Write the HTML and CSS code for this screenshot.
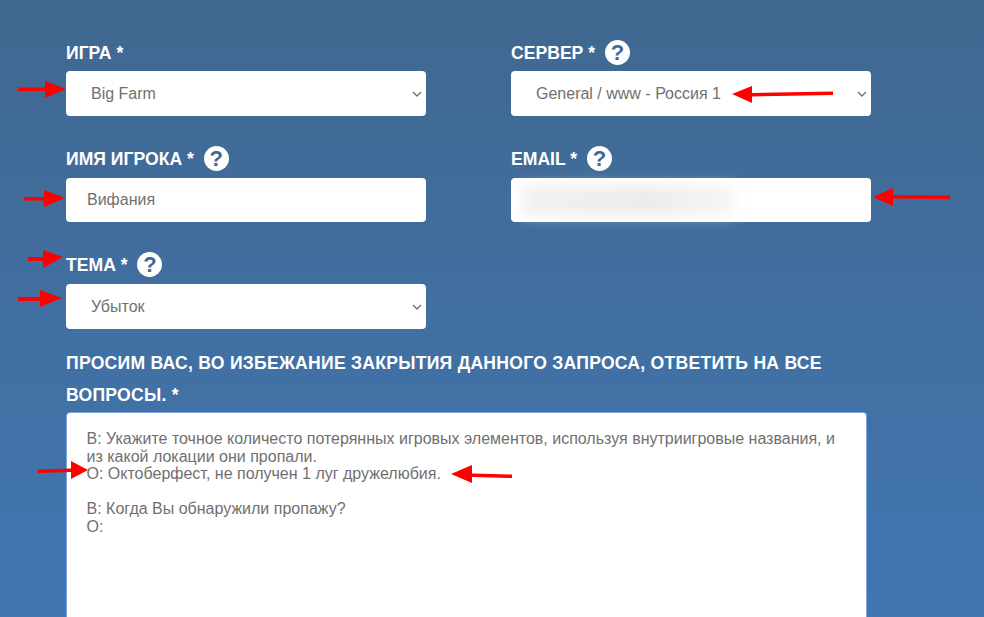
FILE: index.html
```html
<!DOCTYPE html>
<html>
<head>
  <meta charset="UTF-8" />
  <title>Запрос</title>
  <link rel="stylesheet" href="styles.css">
</head>
<body>
  <form class="ticket-form">
    <div class="form-row">
      <div class="field">
        <label class="field-label">Игра * </label>
        <select class="control select-control"><option>Big Farm</option></select>
      </div>
      <div class="field">
        <label class="field-label">Сервер * <span class="help-icon">?</span></label>
        <select class="control select-control"><option>General / www - Россия 1</option></select>
      </div>
    </div>

    <div class="form-row">
      <div class="field">
        <label class="field-label">Имя игрока * <span class="help-icon">?</span></label>
        <input class="control input-control" type="text" value="Вифания">
      </div>
      <div class="field">
        <label class="field-label">Email * <span class="help-icon">?</span></label>
        <div class="email-wrap">
          <input class="control input-control" type="text">
          <div class="email-blur"></div>
        </div>
      </div>
    </div>

    <div class="form-row">
      <div class="field">
        <label class="field-label">Тема * <span class="help-icon">?</span></label>
        <select class="control select-control"><option>Убыток</option></select>
      </div>
    </div>

    <div class="field field-wide">
      <label class="field-label">Просим вас, во избежание закрытия данного запроса, ответить на все вопросы. *</label>
      <textarea class="message">В: Укажите точное количесто потерянных игровых элементов, используя внутриигровые названия, и из какой локации они пропали.
О: Октоберфест, не получен 1 луг дружелюбия.

В: Когда Вы обнаружили пропажу?
О:</textarea>
    </div>
  </form>

  <!-- red arrows drawn on top of the screenshot -->
  <svg class="arrows" width="984" height="617" viewBox="0 0 984 617">
    <path d="M18 87.5L45 87.5L45 81L66 89L45 98L45 91L18 91Z" />
    <path d="M24 197L44 197L44 190L65 198L44 207L44 200.5L24 200.5Z" />
    <path d="M833 91.5L833 95L752 96.5L752 103L732 94L752 86L752 93Z" />
    <path d="M950 195.5L950 199L893 198.5L893 206L873 197L893 188L893 195Z" />
    <path d="M28 257L43 257L43 250L63 257L43 268L43 261L28 261Z" />
    <path d="M18 297L40 297L40 290L62 298L40 307L40 301L18 301Z" />
    <path d="M38 469.5L71 468.5L71 461L88 470L71 479L71 472L38 473Z" />
    <path d="M512 474.5L512 478L472 477L472 483L451 474L472 465L472 473.5Z" />
  </svg>
</body>
</html>
```

FILE: styles.css
```css
* {
  box-sizing: border-box;
}

html, body {
  height: 617px;
  overflow: hidden;
}

body {
  margin: 0;
  background: linear-gradient(180deg, #406890, #4176b1);
  font-family: "Liberation Sans", Arial, sans-serif;
  position: relative;
}

.ticket-form {
  padding: 37px 0 0 66px;
}

.form-row {
  display: grid;
  grid-template-columns: 360px 360px;
  column-gap: 85px;
  margin-bottom: 27px;
}

.form-row:nth-child(3) {
  margin-bottom: 18px;
}

.field-label {
  display: block;
  color: #fff;
  font-size: 17.6px;
  font-weight: bold;
  line-height: 32px;
  text-transform: uppercase;
  margin-bottom: 3px;
}

.form-row:first-child .field-label {
  margin-bottom: 2px;
}

.help-icon {
  display: inline-block;
  width: 25px;
  height: 25px;
  margin-left: 5px;
  border-radius: 50%;
  background: #fff;
  color: #406890;
  font-size: 22px;
  line-height: 25px;
  text-align: center;
  vertical-align: -1px;
}

.control {
  display: block;
  width: 360px;
  background-color: #fff;
  border: none;
  border-radius: 4px;
  color: #707070;
  font-family: inherit;
  font-size: 16px;
}

.select-control {
  height: 45px;
  padding: 0 25px;
  appearance: none;
  background-image: url("data:image/svg+xml,%3Csvg xmlns='http://www.w3.org/2000/svg' width='10' height='6'%3E%3Cpath d='M1 1l4 4 4-4' fill='none' stroke='%23707070' stroke-width='1.4'/%3E%3C/svg%3E");
  background-repeat: no-repeat;
  background-position: right 4px center;
}

.input-control {
  height: 44px;
  padding: 0 21px;
}

.email-wrap {
  position: relative;
}

.email-blur {
  position: absolute;
  left: 12px;
  top: 8px;
  width: 212px;
  height: 29px;
  background: linear-gradient(90deg, #f0f0f0, #ebebeb 60%, #f6f6f6);
  filter: blur(7px);
}

.field-wide .field-label {
  margin-bottom: 1px;
  width: 790px;
  letter-spacing: 0.25px;
}

.message {
  display: block;
  width: 801px;
  height: 400px;
  padding: 17px 20px 17px 19.5px;
  background: #fff;
  border: 1px solid #80a4e0;
  border-radius: 4px;
  color: #707070;
  font-family: inherit;
  font-size: 16px;
  line-height: 17.6px;
  resize: none;
}

.arrows {
  position: absolute;
  left: 0;
  top: 0;
  fill: #f00;
  pointer-events: none;
}
```
